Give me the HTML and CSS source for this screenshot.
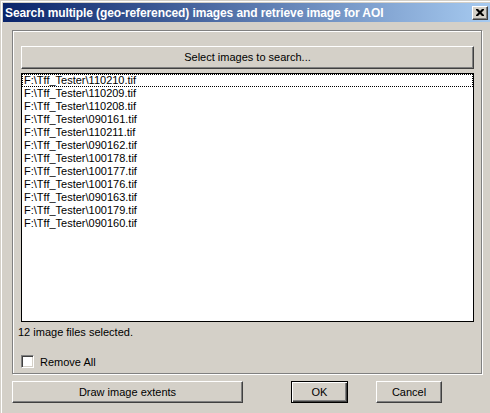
FILE: index.html
```html
<!DOCTYPE html>
<html>
<head>
<meta charset="utf-8">
<link rel="stylesheet" href="styles.css">
</head>
<body>
<div class="frame">
  <div class="window">
    <div class="titlebar">
      <span class="title">Search multiple (geo-referenced) images and retrieve image for AOI</span>
      <span class="close"><svg width="8" height="7" viewBox="0 0 8 7"><path d="M0 0h2l2 2 2-2h2v1l-2.5 2.5L8 6v1H6L4 5 2 7H0V6l2.5-2.5L0 1z" fill="#000"/></svg></span>
    </div>
    <div class="content">
      <div class="group">
        <div class="btn select-btn">Select images to search...</div>
        <div class="list">
          <div class="item focus">F:\Tff_Tester\110210.tif</div>
          <div class="item">F:\Tff_Tester\110209.tif</div>
          <div class="item">F:\Tff_Tester\110208.tif</div>
          <div class="item">F:\Tff_Tester\090161.tif</div>
          <div class="item">F:\Tff_Tester\110211.tif</div>
          <div class="item">F:\Tff_Tester\090162.tif</div>
          <div class="item">F:\Tff_Tester\100178.tif</div>
          <div class="item">F:\Tff_Tester\100177.tif</div>
          <div class="item">F:\Tff_Tester\100176.tif</div>
          <div class="item">F:\Tff_Tester\090163.tif</div>
          <div class="item">F:\Tff_Tester\100179.tif</div>
          <div class="item">F:\Tff_Tester\090160.tif</div>
        </div>
        <div class="status">12 image files selected.</div>
        <label class="check"><span class="box"></span><span>Remove All</span></label>
      </div>
      <div class="buttons">
        <div class="btn draw-btn">Draw image extents</div>
        <div class="btn ok-btn">OK</div>
        <div class="btn cancel-btn">Cancel</div>
      </div>
    </div>
  </div>
</div>
</body>
</html>
```
FILE: styles.css
```css
html, body {
  margin: 0;
  padding: 0;
  background: #d4d0c8;
}
body {
  font-family: "Liberation Sans", Arial, sans-serif;
  font-size: 11px;
  color: #000;
  width: 490px;
  height: 413px;
  overflow: hidden;
}
.frame {
  padding: 1px 0 0 1px;
  height: 412px;
}
.window {
  border-top: 1px solid #fff;
  border-left: 1px solid #fff;
  padding: 1px 0 0 1px;
  height: 410px;
}
.titlebar {
  height: 19px;
  background: linear-gradient(to right, #0a246a, #a6caf0);
  display: flex;
  align-items: center;
  justify-content: space-between;
  padding: 0 2px 0 2px;
}
.title {
  color: #fff;
  font-weight: bold;
  font-size: 12px;
  font-family: "Liberation Sans", Arial, sans-serif;
  letter-spacing: -0.1px;
  white-space: nowrap;
}
.close {
  width: 16px;
  height: 14px;
  box-sizing: border-box;
  background: #d4d0c8;
  border-top: 1px solid #fff;
  border-left: 1px solid #fff;
  border-right: 1px solid #404040;
  border-bottom: 1px solid #404040;
  box-shadow: inset -1px -1px 0 #808080;
  display: flex;
  align-items: center;
  justify-content: center;
  padding: 0 1px 1px 0;
}
.close svg { display: block; }
.content {
  padding: 8px 0 0 9px;
}
.group {
  width: 470px;
  height: 344px;
  box-sizing: border-box;
  border: 1px solid #808080;
  box-shadow: inset 1px 1px 0 #fff, 1px 1px 0 #fff;
  padding: 15px 7px 0 8px;
  display: flex;
  flex-direction: column;
}
.btn {
  box-sizing: border-box;
  background: #d4d0c8;
  border-top: 1px solid #fff;
  border-left: 1px solid #fff;
  border-right: 1px solid #404040;
  border-bottom: 1px solid #404040;
  box-shadow: inset -1px -1px 0 #808080;
  display: flex;
  align-items: center;
  justify-content: center;
  padding-bottom: 1px;
}
.select-btn {
  height: 23px;
  width: 453px;
}
.list {
  margin-top: 4px;
  width: 453px;
  height: 249px;
  box-sizing: border-box;
  border: 1px solid #000;
  background: #fff;
}
.item {
  height: 13px;
  line-height: 13px;
  padding-left: 2px;
  white-space: nowrap;
}
.focus {
  outline: 1px dotted #000;
  outline-offset: -1px;
}
.status {
  margin-top: 4px;
  margin-left: -3px;
  height: 13px;
  line-height: 13px;
}
.check {
  margin-top: 16px;
  display: flex;
  align-items: center;
  gap: 6px;
  height: 13px;
}
.box {
  width: 13px;
  height: 13px;
  box-sizing: border-box;
  background: #fff;
  border-top: 1px solid #808080;
  border-left: 1px solid #808080;
  border-right: 1px solid #fff;
  border-bottom: 1px solid #fff;
  box-shadow: inset 1px 1px 0 #404040, inset -1px -1px 0 #d4d0c8;
}
.buttons {
  display: flex;
  margin-top: 7px;
}
.draw-btn {
  width: 231px;
  height: 22px;
}
.ok-btn {
  margin-left: 48px;
  width: 57px;
  height: 22px;
  border: 1px solid #000;
  box-shadow: inset 1px 1px 0 #fff, inset -1px -1px 0 #404040, inset -2px -2px 0 #808080;
}
.cancel-btn {
  margin-left: 28px;
  width: 66px;
  height: 22px;
}
```
